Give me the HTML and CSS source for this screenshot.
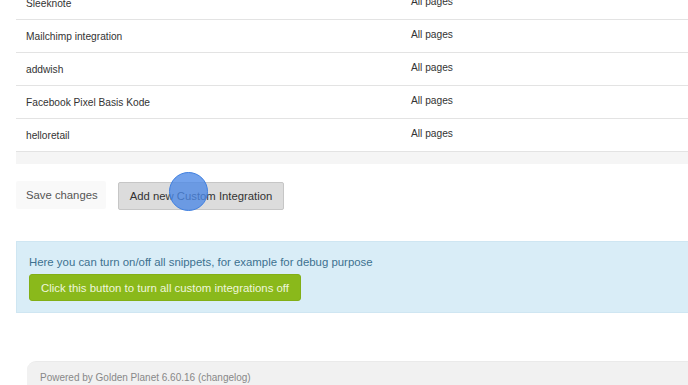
FILE: index.html
```html
<!DOCTYPE html>
<html lang="en">

<head>
    <meta charset="UTF-8" />
    <title>Custom Integrations</title>
    <link rel="stylesheet" href="styles.css">
</head>

<body>
    <div class="page">
        <!-- Integrations table -->
        <div class="table">
            <div class="row"><span class="name">Sleeknote</span><span class="scope">All pages</span></div>
            <div class="row"><span class="name">Mailchimp integration</span><span class="scope">All pages</span></div>
            <div class="row"><span class="name">addwish</span><span class="scope">All pages</span></div>
            <div class="row"><span class="name">Facebook Pixel Basis Kode</span><span class="scope">All pages</span></div>
            <div class="row"><span class="name">helloretail</span><span class="scope">All pages</span></div>
            <div class="table-foot"></div>
        </div>

        <!-- Actions -->
        <div class="actions">
            <button class="btn btn-save">Save changes</button>
            <button class="btn btn-add">Add new Custom Integration
                <span class="click-marker"></span>
            </button>
        </div>

        <!-- Info box -->
        <div class="info">
            <p>Here you can turn on/off all snippets, for example for debug purpose</p>
            <button class="btn btn-green">Click this button to turn all custom integrations off</button>
        </div>

        <div class="footer">Powered by Golden Planet 6.60.16 (changelog)</div>
    </div>
</body>

</html>
```

FILE: styles.css
```css
html,
body {
    margin: 0;
    padding: 0;
    background: #fff;
    font-family: 'Liberation Sans', Arial, sans-serif;
    color: #333;
    overflow: hidden;
}

.page {
    width: 760px;
    padding-left: 16px;
}

/* Tablo */
.table {
    margin-top: -13px;
}

.row {
    display: flex;
    align-items: center;
    height: 32px;
    border-bottom: 1px solid #e3e3e3;
    font-size: 10.2px;
}

.row .name {
    width: 385px;
    padding-left: 10px;
}

.row .scope {
    color: #333;
    margin-bottom: 4px;
}

.table-foot {
    height: 12px;
    background: #f5f5f5;
}

/* Butonlar */
.actions {
    display: flex;
    gap: 12px;
    margin-top: 17px;
}

.btn {
    font-family: inherit;
    font-size: 11.3px;
    border-radius: 2px;
    cursor: pointer;
    position: relative;
    white-space: nowrap;
}

.btn-save {
    width: 90px;
    height: 28px;
    padding: 0 10px;
    background: #f9f9f9;
    border: none;
    color: #555;
    text-align: left;
}

.btn-add {
    width: 166px;
    height: 28px;
    margin-top: 1px;
    background: #dcdcdc;
    border: 1px solid #c6c6c6;
    color: #333;
}

.click-marker {
    position: absolute;
    left: 50px;
    top: -11px;
    width: 37px;
    height: 37px;
    border-radius: 50%;
    background: rgba(76, 136, 230, 0.78);
    border: 1px solid #3f7fe0;
}

/* Bilgi kutusu */
.info {
    margin-top: 31px;
    background: #d9edf7;
    border: 1px solid #cfe6f2;
    padding: 13px 12px 11px;
}

.info p {
    margin: 0 0 5px;
    font-size: 11.4px;
    line-height: 14px;
    color: #3d7190;
}

.btn-green {
    display: block;
    height: 27px;
    width: 272px;
    padding: 0;
    background: #8ab91b;
    border: 1px solid #82af16;
    border-radius: 3px;
    color: #eef6dc;
    font-size: 11.4px;
}

/* Alt bilgi */
.footer {
    margin: 48px 0 0 11px;
    padding: 10px 13px 20px;
    background: #f1f1f1;
    border-top: 1px solid #eaeaea;
    border-radius: 9px 0 0 0;
    font-size: 10px;
    color: #888;
}
```
